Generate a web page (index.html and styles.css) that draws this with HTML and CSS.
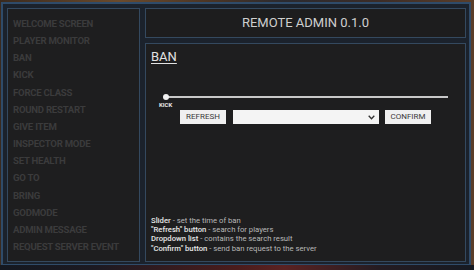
FILE: index.html
```html
<!DOCTYPE html>
<html>
<head>
<meta charset="utf-8">
<link rel="stylesheet" href="styles.css">
</head>
<body>
<div class="window">
  <nav class="menu">
    <div class="item">WELCOME SCREEN</div>
    <div class="item">PLAYER MONITOR</div>
    <div class="item">BAN</div>
    <div class="item">KICK</div>
    <div class="item">FORCE CLASS</div>
    <div class="item">ROUND RESTART</div>
    <div class="item">GIVE ITEM</div>
    <div class="item">INSPECTOR MODE</div>
    <div class="item">SET HEALTH</div>
    <div class="item">GO TO</div>
    <div class="item">BRING</div>
    <div class="item">GODMODE</div>
    <div class="item">ADMIN MESSAGE</div>
    <div class="item">REQUEST SERVER EVENT</div>
  </nav>
  <div class="main">
    <header class="title">REMOTE ADMIN 0.1.0</header>
    <section class="content">
      <h1 class="heading">BAN</h1>
      <div class="slider">
        <div class="track"><span class="thumb"></span></div>
        <div class="slider-label">KICK</div>
      </div>
      <div class="controls">
        <button class="btn">REFRESH</button>
        <div class="dropdown">
          <svg class="chev" width="7" height="5" viewBox="0 0 7 5"><path d="M0.7 0.8 L3.5 3.8 L6.3 0.8" fill="none" stroke="#333" stroke-width="1.3"/></svg>
        </div>
        <button class="btn">CONFIRM</button>
      </div>
      <div class="help">
        <div><b>Slider</b> - set the time of ban</div>
        <div><b>"Refresh" button</b> - search for players</div>
        <div><b>Dropdown list</b> - contains the search result</div>
        <div><b>"Confirm" button</b> - send ban request to the server</div>
      </div>
    </section>
  </div>
</div>
</body>
</html>
```
FILE: styles.css
```css
html, body {
  margin: 0;
  padding: 0;
}
body {
  width: 474px;
  height: 270px;
  overflow: hidden;
  font-family: Roboto, "Liberation Sans", sans-serif;
  background: linear-gradient(to right, #3a2a1e 0%, #6a4a2c 25%, #4a3424 45%, #2a2a30 60%, #3c2c26 80%, #5a3e2a 100%);
  position: relative;
}
body::after {
  content: "";
  position: absolute;
  left: 0;
  right: 0;
  bottom: 0;
  height: 5px;
  background: linear-gradient(to right, #141820 0%, #1c1a22 20%, #4a1c1c 50%, #5a2222 60%, #241c22 80%, #161a22 100%);
}
.window {
  box-sizing: border-box;
  margin: 2px 3px 0 1px;
  height: 264px;
  border: 2px solid #2f4b69;
  background: #1b222c;
  padding: 4px 3px 2px 4px;
  display: flex;
  gap: 5px;
}
.menu {
  box-sizing: border-box;
  width: 133px;
  border: 1px solid #34495f;
  background: #1e1e1f;
  padding: 6px 4px 0 5px;
}
.item {
  font-size: 9.6px;
  font-weight: 700;
  letter-spacing: -0.25px;
  line-height: 17.15px;
  color: #3b3b3c;
  white-space: nowrap;
}
.main {
  flex: 1;
  display: flex;
  flex-direction: column;
  gap: 5px;
}
.title {
  box-sizing: border-box;
  height: 30px;
  border: 1px solid #34495f;
  background: #1d1d1e;
  color: #cfcfcf;
  font-size: 13px;
  text-align: center;
  line-height: 28px;
}
.content {
  box-sizing: border-box;
  flex: 1;
  border: 1px solid #34495f;
  background: #1e1e1f;
  padding: 5px 5px 8px 5px;
  display: flex;
  flex-direction: column;
}
.heading {
  margin: 0;
  font-size: 13px;
  font-weight: 400;
  line-height: 16px;
  color: #e2e2e2;
  text-decoration: underline;
  text-underline-offset: 2px;
  text-decoration-thickness: 1px;
  align-self: flex-start;
}
.slider {
  margin: 31px 12px 0 15px;
  position: relative;
}
.track {
  height: 2px;
  background: #c8c8c8;
  position: relative;
}
.thumb {
  position: absolute;
  left: -3px;
  top: -2px;
  width: 6px;
  height: 6px;
  border-radius: 50%;
  background: #f2f2f2;
}
.slider-label {
  font-size: 6px;
  font-weight: 700;
  color: #e8e8e8;
  margin: 3px 0 0 -7px;
  line-height: 8px;
}
.controls {
  display: flex;
  gap: 6px;
  margin: 1px 0 0 29px;
  height: 14px;
}
.btn {
  box-sizing: border-box;
  width: 46px;
  height: 14px;
  padding: 0;
  border: none;
  background: #f0f0f0;
  color: #3a3a3a;
  font-family: Roboto, "Liberation Sans", sans-serif;
  font-size: 8px;
  line-height: 14px;
  text-align: center;
}
.dropdown {
  box-sizing: border-box;
  width: 146px;
  height: 14px;
  background: #f4f4f4;
  margin-left: 1px;
  display: flex;
  align-items: center;
  justify-content: flex-end;
  padding-right: 4px;
}
.help {
  margin-top: auto;
  font-size: 7.7px;
  line-height: 9.33px;
  color: #b8b8b8;
  white-space: nowrap;
}
.help b {
  color: #e6e6e6;
  font-weight: 500;
}
```
